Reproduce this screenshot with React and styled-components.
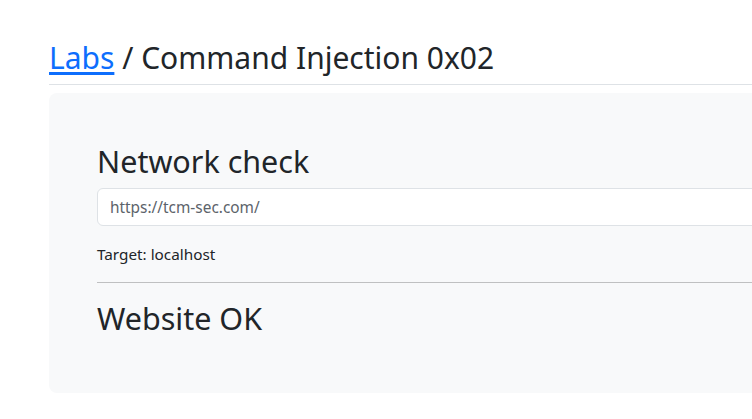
import React from 'react';
import styled, { createGlobalStyle } from 'styled-components';

const GlobalStyle = createGlobalStyle`
  html, body {
    margin: 0;
    padding: 0;
    background: #fff;
    overflow: hidden;
  }
  body {
    font-family: "Noto Sans", "Open Sans", sans-serif;
    color: #212529;
  }
`;

const Page = styled.div`
  width: 1100px;
  padding: 40px 0 0 49px;
`;

const Title = styled.h1`
  margin: 0;
  padding-bottom: 8px;
  font-size: 30px;
  font-weight: 400;
  line-height: 1.2;
  border-bottom: 1px solid #dee2e6;

  a {
    color: #0d6efd;
    text-decoration: underline;
    text-underline-offset: 3px;
  }
`;

const Card = styled.div`
  margin-top: 8px;
  background: #f8f9fa;
  border-radius: 8px;
  padding: 50px 48px 48px;
  height: 300px;
  box-sizing: border-box;
`;

const Heading = styled.h2`
  margin: 0 0 9px;
  font-size: 30.5px;
  font-weight: 400;
  line-height: 36px;
`;

const Input = styled.input`
  display: block;
  width: 100%;
  box-sizing: border-box;
  height: 38px;
  padding: 6px 12px;
  font-family: inherit;
  font-size: 15.4px;
  color: #5c636a;
  background: #fff;
  border: 1px solid #dee2e6;
  border-radius: 6px;
  outline: none;
`;

const Target = styled.p`
  margin: 17px 0 16px;
  font-size: 15.3px;
  line-height: 22.5px;
`;

const Divider = styled.hr`
  margin: 0 0 17px;
  border: 0;
  border-top: 1px solid #bfc0c1;
`;

export default function App() {
  return (
    <>
      <GlobalStyle />
      <Page>
        <Title>
          <a href="#">Labs</a> / Command Injection 0x02
        </Title>
        <Card>
          <Heading>Network check</Heading>
          <Input defaultValue="https://tcm-sec.com/" />
          <Target>Target: localhost</Target>
          <Divider />
          <Heading>Website OK</Heading>
        </Card>
      </Page>
    </>
  );
}
